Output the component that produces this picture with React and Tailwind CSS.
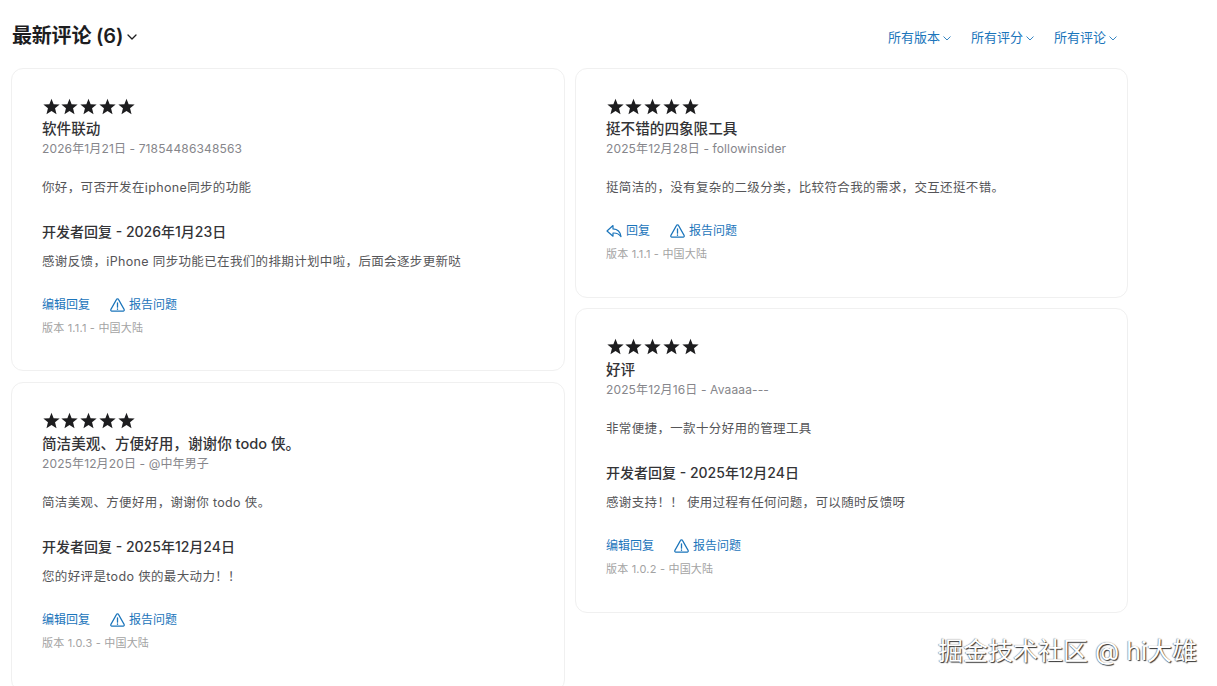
import React from "react";

const Chevron = ({ size = 8, sw = 1.2 }) => (
  <svg width={size} height={size * 0.6} viewBox="0 0 10 6" fill="none" stroke="currentColor" strokeWidth={sw} strokeLinecap="round" strokeLinejoin="round">
    <path d="M1 1l4 4 4-4" />
  </svg>
);

const Stars = () => (
  <div className="ml-[0.5px] flex h-[18px] items-center gap-[1.75px] text-[#1d1d1f]">
    {[0, 1, 2, 3, 4].map((i) => (
      <svg key={i} width="17" height="17" viewBox="0 0 24 24" fill="currentColor">
        <path d="M12 1l3 7.7 8.5.6-6.5 5.3 2.1 8.2L12 18.3l-7.1 4.5 2.1-8.2L.5 9.3l8.5-.6z" />
      </svg>
    ))}
  </div>
);

const Warn = () => (
  <svg width="15" height="14" viewBox="0 0 15 14" fill="none" stroke="currentColor" strokeWidth="1.2" strokeLinejoin="round" strokeLinecap="round">
    <path d="M6.4 1.6a1.2 1.2 0 0 1 2.2 0l5.5 9.8a1.1 1.1 0 0 1-1 1.7H1.9a1.1 1.1 0 0 1-1-1.7z" />
    <path d="M7.5 5v4.2" strokeWidth="1.3" />
    <path d="M7.5 11v.2" strokeWidth="1.4" />
  </svg>
);

const ReplyIcon = () => (
  <svg width="16" height="14" viewBox="0 0 16 14" fill="none" stroke="currentColor" strokeWidth="1.2" strokeLinejoin="round" strokeLinecap="round">
    <path d="M7 1.5 1 7l6 5.2V9c3.6-.2 6 .8 8 3.6-.6-4.4-3.2-7.4-8-7.7z" />
  </svg>
);

const Actions = ({ first, gap, iconFirst }) => (
  <div className="flex h-[18px] items-center text-[12px] text-[#1b75bb]">
    {iconFirst && <span className="mr-[4px] flex"><ReplyIcon /></span>}
    <span>{first}</span>
    <span className="flex" style={{ marginLeft: gap }}><Warn /></span>
    <span className="ml-[4px]">报告问题</span>
  </div>
);

const Card = ({ title, meta, body, reply, version, first = "编辑回复", gap = 20, iconFirst, height, top = 28 }) => (
  <section className="flex shrink-0 flex-col rounded-[12px] border border-[#f0f0f0] bg-white px-[30px]" style={{ height, paddingTop: top }}>
    <Stars />
    <h3 className="mt-[5px] h-[18px] text-[14.6px] font-medium leading-[18px] text-[#333336]">{title}</h3>
    <p className="mt-[3px] h-[16px] text-[12px] leading-[16px] tracking-[0.13px] text-[#86868b]">{meta}</p>
    <p className="mt-[22px] h-[18px] text-[12.5px] leading-[18px] tracking-[0.35px] text-[#555558]">{body}</p>
    {reply ? (
      <>
        <p className="mt-[26px] h-[18px] text-[14px] font-medium leading-[18px] text-[#333336]">{reply[0]}</p>
        <p className="mt-[12px] h-[18px] text-[12.5px] leading-[18px] tracking-[0.35px] text-[#555558]">{reply[1]}</p>
        <div className="mt-[25px]"><Actions first={first} gap={gap} /></div>
      </>
    ) : (
      <div className="mt-[25px]"><Actions first={first} gap={gap} iconFirst={iconFirst} /></div>
    )}
    <p className="mt-[6px] h-[16px] text-[11px] leading-[16px] tracking-[0.2px] text-[#a3a3a3]">{version}</p>
  </section>
);

const Filter = ({ label }) => (
  <div className="flex items-center gap-[3px] text-[13px] text-[#1b75bb]">
    <span>{label}</span>
    <Chevron size={8} sw={1.1} />
  </div>
);

export default function App() {
  return (
    <div className="relative h-[686px] w-[1217px] overflow-hidden bg-white pl-[11px] font-['Inter','Noto_Sans_CJK_SC',sans-serif]">
      <header className="ml-[1px] flex h-[68px] w-[1105px] items-center justify-between pt-[4px]">
        <div className="flex items-center gap-[4px] text-[#1d1d1f]">
          <h2 className="text-[20px] font-semibold leading-[28px] tracking-[-0.2px]">最新评论 (6)</h2>
          <span className="mt-[2px]"><Chevron size={10} sw={1.3} /></span>
        </div>
        <div className="mt-[4px] flex items-center gap-[20px]">
          <Filter label="所有版本" />
          <Filter label="所有评分" />
          <Filter label="所有评论" />
        </div>
      </header>
      <div className="flex w-[1117px] gap-[10px]">
        <div className="flex w-[554px] flex-col gap-[11px]">
          <Card height={303} title="软件联动" meta="2026年1月21日 - 71854486348563" body="你好，可否开发在iphone同步的功能" reply={["开发者回复 - 2026年1月23日", "感谢反馈，iPhone 同步功能已在我们的排期计划中啦，后面会逐步更新哒"]} version="版本 1.1.1 - 中国大陆" />
          <Card height={310} top={28.6} title="简洁美观、方便好用，谢谢你 todo 侠。" meta="2025年12月20日 - @中年男子" body="简洁美观、方便好用，谢谢你 todo 侠。" reply={["开发者回复 - 2025年12月24日", "您的好评是todo 侠的最大动力！！"]} version="版本 1.0.3 - 中国大陆" />
        </div>
        <div className="flex w-[553px] flex-col gap-[10px]">
          <Card height={230} title="挺不错的四象限工具" meta="2025年12月28日 - followinsider" body="挺简洁的，没有复杂的二级分类，比较符合我的需求，交互还挺不错。" first="回复" iconFirst gap={20} version="版本 1.1.1 - 中国大陆" />
          <Card height={305} top={28.6} title="好评" meta="2025年12月16日 - Avaaaa---" body="非常便捷，一款十分好用的管理工具" reply={["开发者回复 - 2025年12月24日", "感谢支持！！ 使用过程有任何问题，可以随时反馈呀"]} gap={20} version="版本 1.0.2 - 中国大陆" />
        </div>
      </div>
      <div className="absolute left-[938px] top-[634px] text-[25px] leading-[34px] text-white [text-shadow:1px_1px_1px_#333,-0.5px_-0.5px_1px_#777]">掘金技术社区 @ hi大雄</div>
    </div>
  );
}
